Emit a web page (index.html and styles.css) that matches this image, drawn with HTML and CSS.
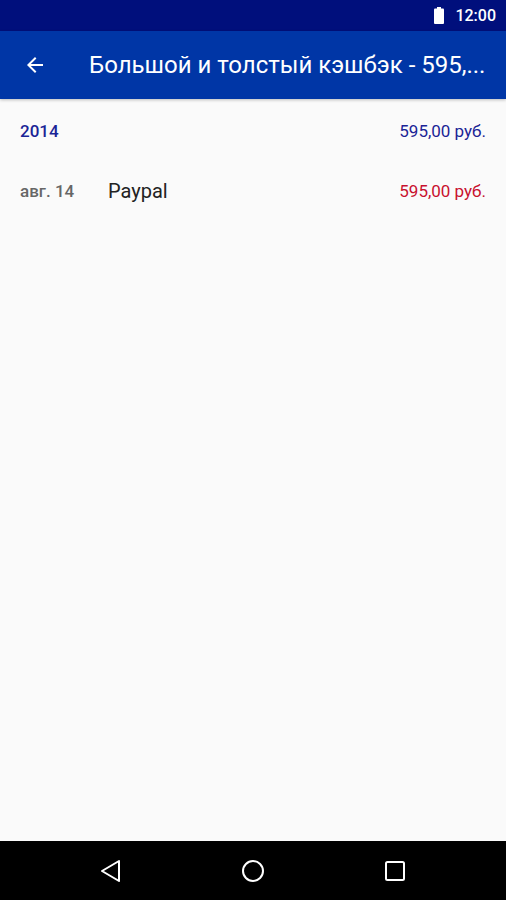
FILE: index.html
```html
<!DOCTYPE html>
<html lang="ru">
<head>
  <meta charset="UTF-8">
  <meta name="viewport" content="width=device-width, initial-scale=1.0">
  <title>Большой и толстый кэшбэк</title>
  <link rel="stylesheet" href="styles.css">
</head>
<body>
  <div class="screen">
    <div class="status-bar">
      <svg class="battery" width="10" height="17" viewBox="0 0 10 17">
        <rect x="3" y="0" width="4" height="2" fill="#fff"/>
        <rect x="0" y="1.5" width="10" height="15.5" rx="1" fill="#fff"/>
      </svg>
      <span class="clock">12:00</span>
    </div>

    <header class="app-bar">
      <svg class="back" width="24" height="24" viewBox="0 0 24 24">
        <path d="M20 11H7.83l5.59-5.59L12 4l-8 8 8 8 1.41-1.41L7.83 13H20v-2z" fill="#fff"/>
      </svg>
      <h1 class="title">Большой и толстый кэшбэк - 595,...</h1>
    </header>

    <main class="content">
      <div class="row year-row">
        <span class="year">2014</span>
        <span class="sum sum-year">595,00 руб.</span>
      </div>
      <div class="row item-row">
        <span class="date">авг. 14</span>
        <span class="name">Paypal</span>
        <span class="sum sum-out">595,00 руб.</span>
      </div>
    </main>

    <nav class="nav-bar">
      <svg width="24" height="24" viewBox="0 0 24 24">
        <path d="M20 2 L3 12 L20 22 Z" fill="none" stroke="#fff" stroke-width="2" stroke-linejoin="round"/>
      </svg>
      <svg width="24" height="24" viewBox="0 0 24 24">
        <circle cx="12" cy="12" r="10" fill="none" stroke="#fff" stroke-width="2"/>
      </svg>
      <svg width="24" height="24" viewBox="0 0 24 24">
        <rect x="3" y="3" width="18" height="18" rx="1.5" fill="none" stroke="#fff" stroke-width="2"/>
      </svg>
    </nav>
  </div>
</body>
</html>
```

FILE: styles.css
```css
html, body {
  margin: 0;
  padding: 0;
}

body {
  font-family: Roboto, "Noto Sans", Arial, sans-serif;
  background: #fafafa;
}

.screen {
  display: flex;
  flex-direction: column;
  width: 506px;
  height: 900px;
}

.status-bar {
  height: 31px;
  background: #000f7c;
  color: #fff;
  display: flex;
  align-items: center;
  justify-content: flex-end;
  padding-right: 10px;
  gap: 11px;
}

.clock {
  font-size: 16px;
  font-weight: 500;
}

.app-bar {
  height: 68px;
  background: #0036a6;
  display: flex;
  align-items: center;
  padding-left: 23px;
  padding-right: 14px;
  box-shadow: 0 1px 3px rgba(0, 0, 0, 0.25);
}

.back {
  flex: none;
}

.title {
  margin: 0 0 0 42px;
  font-size: 24px;
  font-weight: 400;
  color: #fff;
  white-space: nowrap;
}

.content {
  flex: 1;
  padding: 2px 20px 0;
}

.row {
  display: flex;
  align-items: center;
  font-size: 17px;
  height: 60px;
}

.year {
  color: #1a2496;
  font-weight: 500;
}

.date {
  color: #666;
  font-weight: 500;
  width: 88px;
}

.name {
  color: #222;
  font-size: 20px;
}

.sum {
  margin-left: auto;
}

.sum-year {
  color: #1a2496;
}

.sum-out {
  color: #c8102e;
}

.nav-bar {
  height: 59px;
  background: #000;
  display: flex;
  align-items: center;
  padding-left: 99px;
  gap: 118px;
}
```
